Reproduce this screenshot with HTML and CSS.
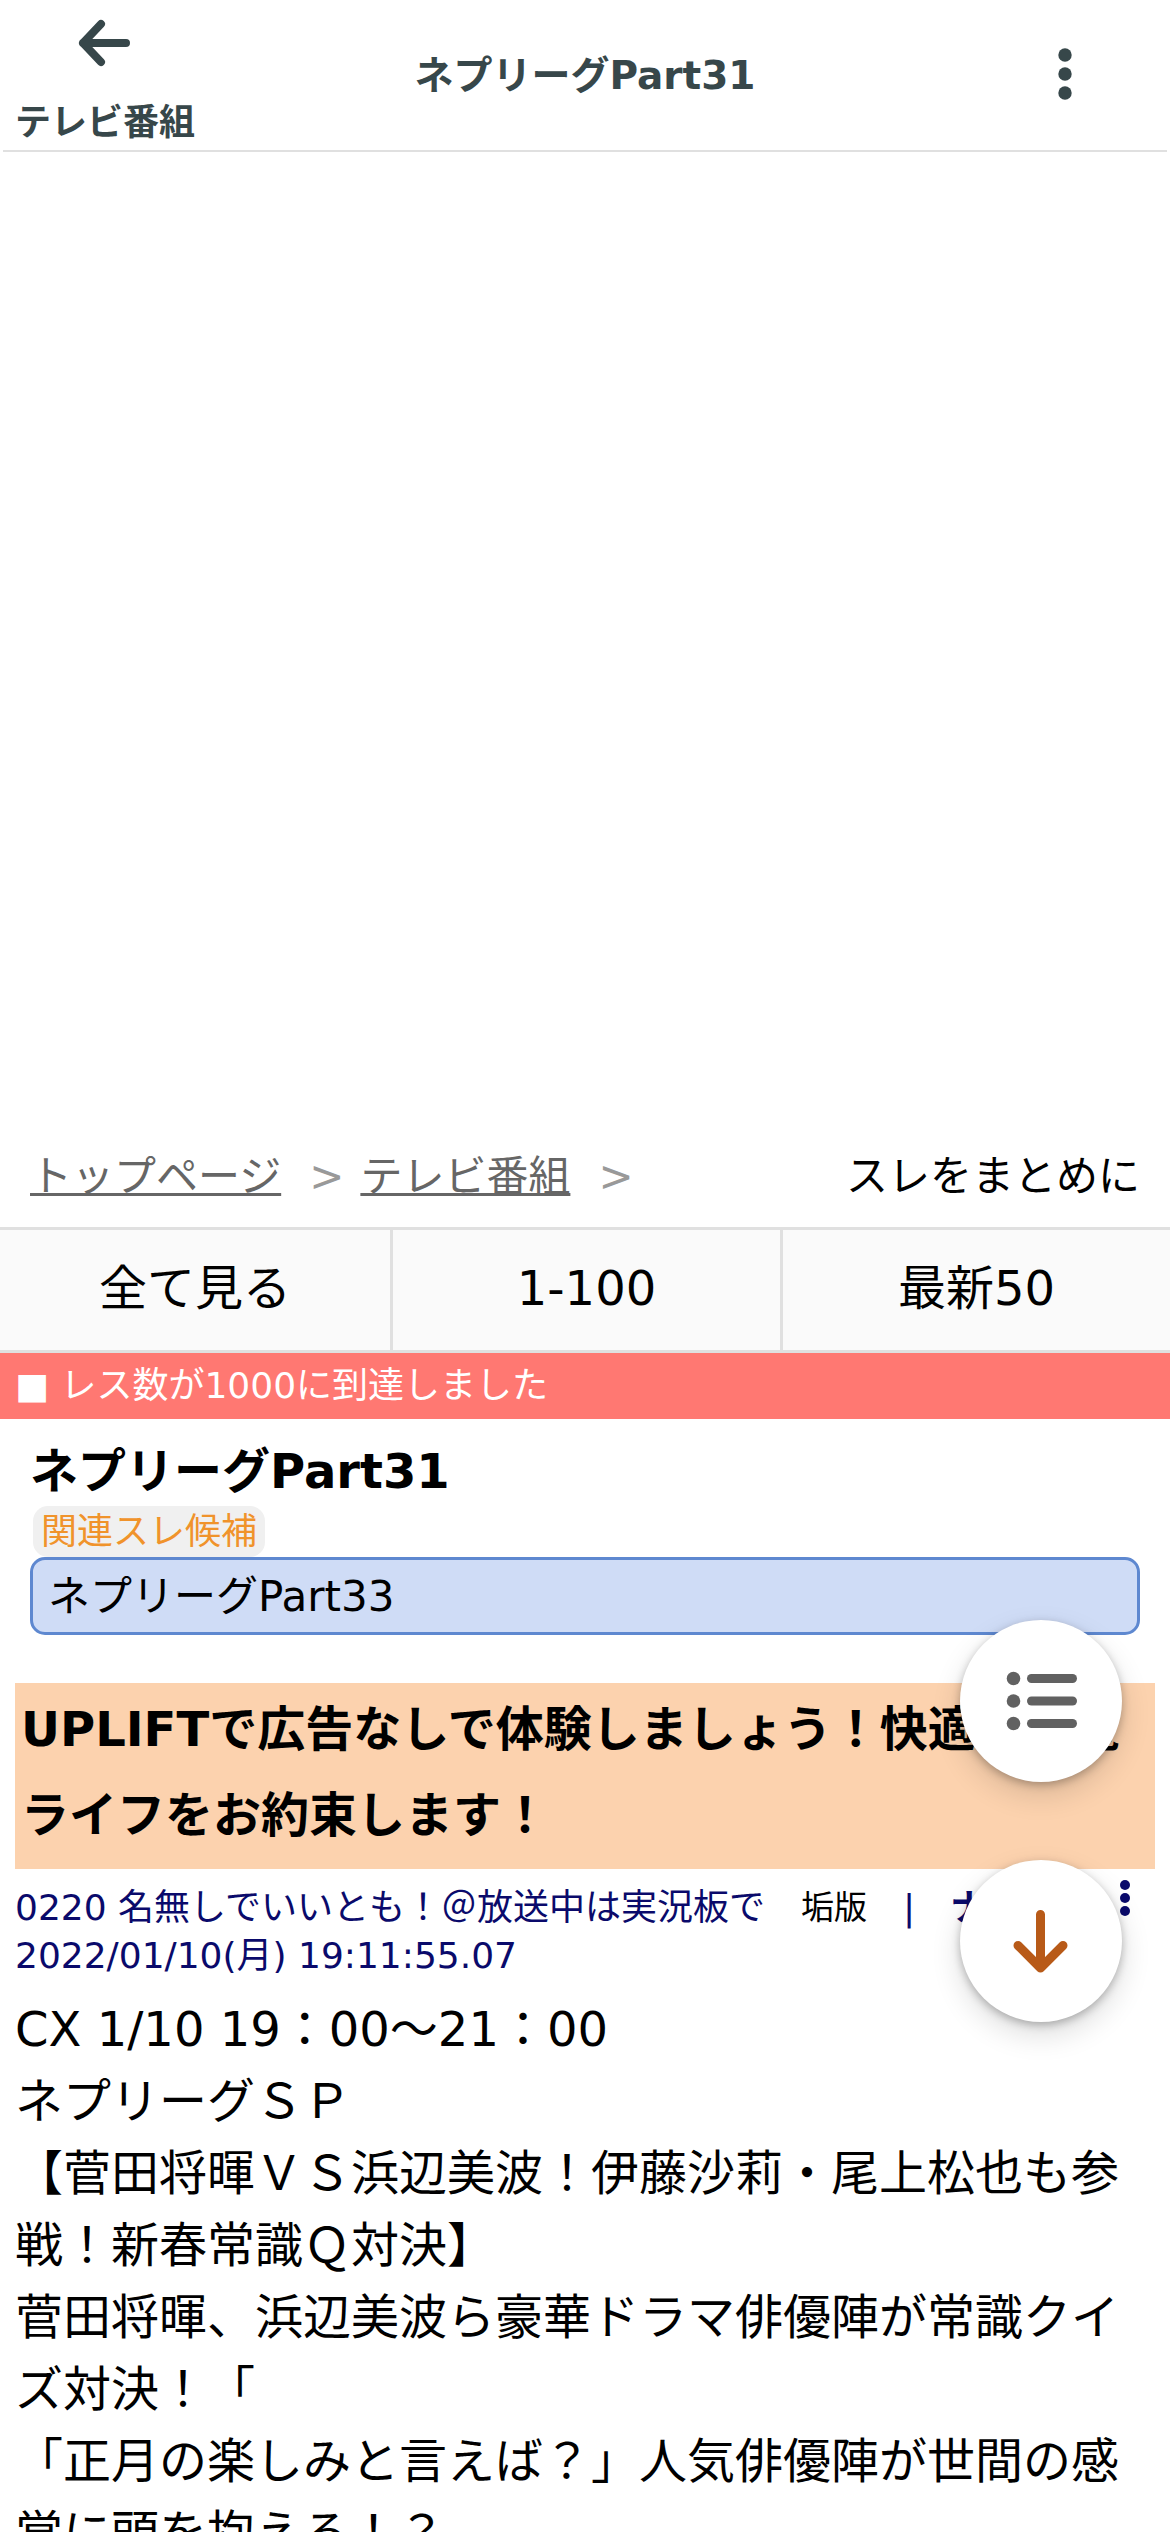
FILE: index.html
```html
<!DOCTYPE html>
<html lang="ja">
<head>
<meta charset="utf-8">
<title>ネプリーグPart31</title>
<link rel="stylesheet" href="styles.css">
</head>
<body>
<header class="topbar">
  <a class="back">
    <svg class="back-icon" width="60" height="54" viewBox="0 0 60 54" fill="none" stroke="currentColor" stroke-width="8" stroke-linecap="round" stroke-linejoin="round"><path d="M51 28H8M26 9L8 28L26 47"/></svg>
    <span class="back-label">テレビ番組</span>
  </a>
  <h1 class="topbar-title">ネプリーグPart31</h1>
  <svg class="more" width="60" height="60" viewBox="0 0 60 60" fill="currentColor"><circle cx="30" cy="11" r="6.7"/><circle cx="30" cy="30" r="6.7"/><circle cx="30" cy="49" r="6.7"/></svg>
</header>
<div class="ad-space"></div>
<nav class="crumbs">
  <a class="crumb">トップページ</a><span class="sep">&gt;</span><a class="crumb">テレビ番組</a><span class="sep sep-last">&gt;</span>
  <span class="matome">スレをまとめに</span>
</nav>
<nav class="tabs">
  <a class="tab">全て見る</a>
  <a class="tab">1-100</a>
  <a class="tab">最新50</a>
</nav>
<p class="notice">■ レス数が1000に到達しました</p>
<section class="thread-head">
  <h2 class="thread-title">ネプリーグPart31</h2>
  <span class="badge">関連スレ候補</span>
  <a class="related">ネプリーグPart33</a>
</section>
<aside class="promo">UPLIFTで広告なしで体験しましょう！快適な閲覧ライフをお約束します！</aside>
<article class="post">
  <div class="post-head">
    <div class="post-meta"><span>0220 名無しでいいとも！＠放送中は実況板で</span><span class="account">垢版</span><span class="bar">|</span><b>ナイス</b></div>
    <time class="post-date">2022/01/10(月) 19:11:55.07</time>
    <svg class="post-menu" width="12" height="40" viewBox="0 0 12 40" fill="currentColor"><circle cx="6" cy="7" r="5"/><circle cx="6" cy="20" r="5"/><circle cx="6" cy="33" r="5"/></svg>
  </div>
  <p class="post-body">CX 1/10 19：00〜21：00<br>ネプリーグＳＰ<br>【菅田将暉ＶＳ浜辺美波！伊藤沙莉・尾上松也も参戦！新春常識Ｑ対決】<br>菅田将暉、浜辺美波ら豪華ドラマ俳優陣が常識クイズ対決！「<br>「正月の楽しみと言えば？」人気俳優陣が世間の感覚に頭を抱える！？</p>
</article>
<div class="fabs">
  <button class="fab fab-list"><svg width="162" height="162" viewBox="0 0 162 162" fill="currentColor"><circle cx="53.5" cy="58.5" r="6.8"/><circle cx="53.5" cy="81" r="6.8"/><circle cx="53.5" cy="103.500" r="6.8"/><rect x="67" y="54" width="50" height="9" rx="4.500"/><rect x="67" y="76.500" width="50" height="9" rx="4.500"/><rect x="67" y="99" width="50" height="9" rx="4.500"/></svg></button>
  <button class="fab fab-down"><svg width="162" height="162" viewBox="0 0 162 162" fill="none" stroke="currentColor" stroke-width="9" stroke-linecap="round" stroke-linejoin="round"><path d="M80.500 54.500V108M58 85.500L80.500 108L103 85.500"/></svg></button>
</div>
</body>
</html>
```
FILE: styles.css
```css
* {
  box-sizing: border-box;
}

body {
  margin: 0;
  width: 1170px;
  height: 2532px;
  overflow: hidden;
  position: relative;
  background: #fff;
  color: #000;
  font-family: "DejaVu Sans", "Noto Sans CJK JP", sans-serif;
  font-size: 48px;
}

h1, h2, p {
  margin: 0;
}

.topbar {
  display: grid;
  grid-template-columns: 204px 1fr 204px;
  align-items: center;
  height: 152px;
  margin: 0 3px;
  border-bottom: 2px solid #e0e0e0;
  color: #37474a;
}

.back {
  display: flex;
  flex-direction: column;
  align-items: center;
  align-self: start;
  padding-top: 15px;
}

.back-icon {
  display: block;
}

.back-label {
  height: 52px;
  margin-top: 28px;
  font-size: 36px;
  font-weight: bold;
  line-height: 52px;
}

.topbar-title {
  padding-top: 1px;
  text-align: center;
  font-size: 39px;
  line-height: 54px;
}

.more {
  justify-self: center;
  margin-bottom: 3px;
}

.ad-space {
  height: 976px;
}

.crumbs {
  display: flex;
  align-items: center;
  height: 99px;
  padding: 0 30px 2px;
  font-size: 42px;
  line-height: 63px;
}

.crumb {
  color: #666;
  text-decoration: underline;
  text-decoration-thickness: 3px;
}

.sep {
  margin: 0 16px 0 28px;
  color: #999;
}

.sep-last {
  margin-right: auto;
}

.tabs {
  display: grid;
  grid-template-columns: 393px 390px 387px;
  height: 126px;
  border-top: 3px solid #e0e0e0;
  border-bottom: 3px solid #e0e0e0;
  background: #fafafa;
}

.tab {
  text-align: center;
  line-height: 117px;
}

.tab:not(:last-child) {
  border-right: 3px solid #e0e0e0;
}

.notice {
  height: 66px;
  padding-left: 15px;
  background: #ff7872;
  color: #fff;
  font-size: 36px;
  line-height: 66px;
}

.thread-head {
  display: flex;
  flex-direction: column;
  align-items: flex-start;
  height: 264px;
  padding: 15px 30px 0;
}

.thread-title {
  height: 72px;
  font-size: 48px;
  line-height: 74px;
}

.badge {
  height: 51px;
  padding: 0 8px;
  margin-left: 3px;
  border-radius: 15px;
  background: #f0f0f0;
  color: #f0932b;
  font-size: 36px;
  line-height: 52px;
}

.related {
  width: 100%;
  height: 78px;
  padding-left: 15px;
  border: 3px solid #5e88d0;
  border-radius: 15px;
  background: #cfdcf6;
  font-size: 42px;
  line-height: 73px;
}

.promo {
  height: 186px;
  margin: 0 15px;
  padding: 3px 6px;
  background: #fcd2ae;
  font-weight: bold;
  line-height: 86.4px;
}

.post {
  padding: 0 15px;
}

.post-head {
  position: relative;
  height: 124px;
  padding-top: 15px;
  color: #0a0a6b;
  font-size: 36px;
  line-height: 48px;
}

.post-meta {
  display: flex;
  height: 48px;
}

.account {
  margin-left: 36px;
  color: #000;
  font-size: 33px;
}

.bar {
  margin: 0 35px 0 36px;
}

.post-date {
  display: block;
}

.post-menu {
  position: absolute;
  top: 9px;
  right: 24px;
}

.post-body {
  line-height: 72px;
}

.fabs {
  position: absolute;
  top: 1620px;
  left: 960px;
  display: flex;
  flex-direction: column;
  gap: 78px;
}

.fab {
  width: 162px;
  height: 162px;
  padding: 0;
  border: 0;
  border-radius: 50%;
  background: #fff;
  box-shadow: 0 3px 8px rgba(0, 0, 0, 0.26), 0 12px 30px rgba(0, 0, 0, 0.14);
}

.fab svg {
  display: block;
}

.fab-list {
  color: #616161;
}

.fab-down {
  color: #b85a18;
}
```
